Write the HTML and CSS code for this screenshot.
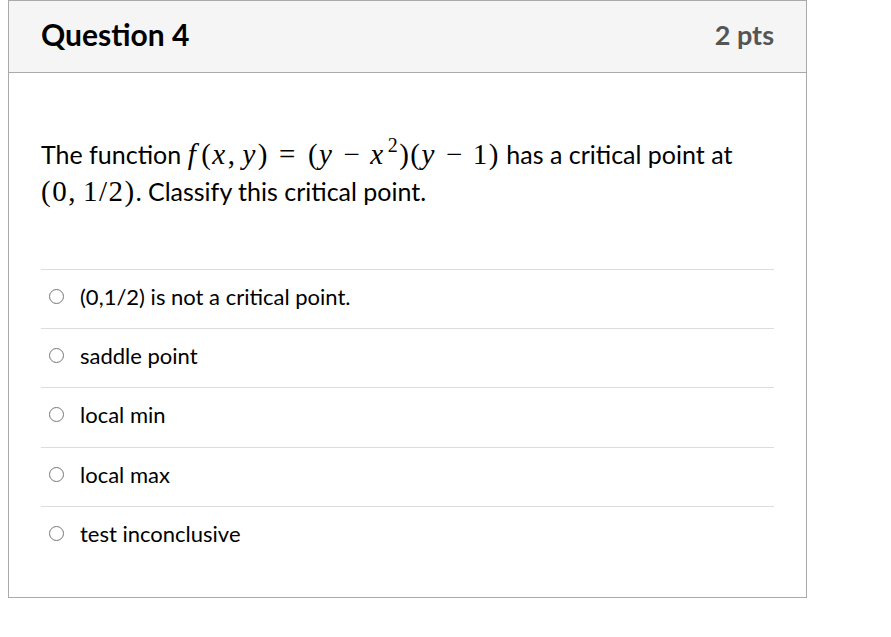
FILE: index.html
```html
<!DOCTYPE html>
<html>
<head>
<meta charset="utf-8">
<link rel="stylesheet" href="styles.css">
</head>
<body>
<div class="card">
  <div class="header">
    <h2 class="title">Question 4</h2>
    <span class="pts">2 pts</span>
  </div>
  <div class="content">
    <p class="question">The function <span class="math"><i>f</i><span class="thin"></span>(<i>x</i>,<span class="sp"></span><i>y</i>)<span class="rel">=</span>(<i>y</i><span class="bin">−</span><i>x</i><sup>2</sup>)(<i>y</i><span class="bin">−</span>1)</span> has a critical point at <span class="math">(0,<span class="sp"></span>1/2)</span>. Classify this critical point.</p>
    <div class="answers">
      <label class="answer"><span class="radio"></span><span class="atext">(0,1/2) is not a critical point.</span></label>
      <label class="answer"><span class="radio"></span><span class="atext">saddle point</span></label>
      <label class="answer"><span class="radio"></span><span class="atext">local min</span></label>
      <label class="answer"><span class="radio"></span><span class="atext">local max</span></label>
      <label class="answer"><span class="radio"></span><span class="atext">test inconclusive</span></label>
    </div>
  </div>
</div>
</body>
</html>
```

FILE: styles.css
```css
html, body {
  margin: 0;
  padding: 0;
  background: #fff;
}
body {
  padding: 0 8px;
  font-family: Lato, "Liberation Sans", sans-serif;
  color: #2d3b45;
}
.card {
  width: 797px;
  border: 1px solid #aaaaaa;
  box-sizing: content-box;
}
.header {
  display: flex;
  justify-content: space-between;
  align-items: center;
  height: 72px;
  box-sizing: border-box;
  padding: 0 32px 5px;
  background: #f5f5f5;
  border-bottom: 1px solid #aaaaaa;
}
.title {
  margin: 0;
  font-size: 30px;
  font-weight: 700;
  color: #000;
}
.pts {
  font-size: 27px;
  font-weight: 700;
  color: #555;
}
.content {
  padding: 63px 32px 32px;
}
.question {
  margin: 0 0 59px;
  font-size: 25px;
  line-height: 37px;
  color: #000;
}
.math {
  font-family: "Liberation Serif", "DejaVu Serif", serif;
  font-size: 29px;
  letter-spacing: 1.5px;
  white-space: nowrap;
}
.math i {
  font-style: italic;
  padding-right: 1px;
}
.math sup {
  font-size: 20px;
  line-height: 0;
  vertical-align: 12px;
  padding-left: 2px;
}
.thin { display: inline-block; width: 3px; }
.sp { display: inline-block; width: 6px; }
.rel { padding: 0 11px 0 10px; }
.bin { padding: 0 9px 0 9px; }
.answers {
  display: flex;
  flex-direction: column;
}
.answer {
  display: flex;
  align-items: center;
  height: 59px;
  box-sizing: border-box;
  border-top: 1px solid #dddddd;
  padding: 0 0 6px 8px;
}
.answer:nth-child(3) {
  height: 60px;
}
.radio {
  width: 15px;
  height: 15px;
  border: 1.5px solid #777777;
  border-radius: 50%;
  margin-right: 16px;
  box-sizing: border-box;
}
.atext {
  font-size: 22px;
  color: #000;
}
```
